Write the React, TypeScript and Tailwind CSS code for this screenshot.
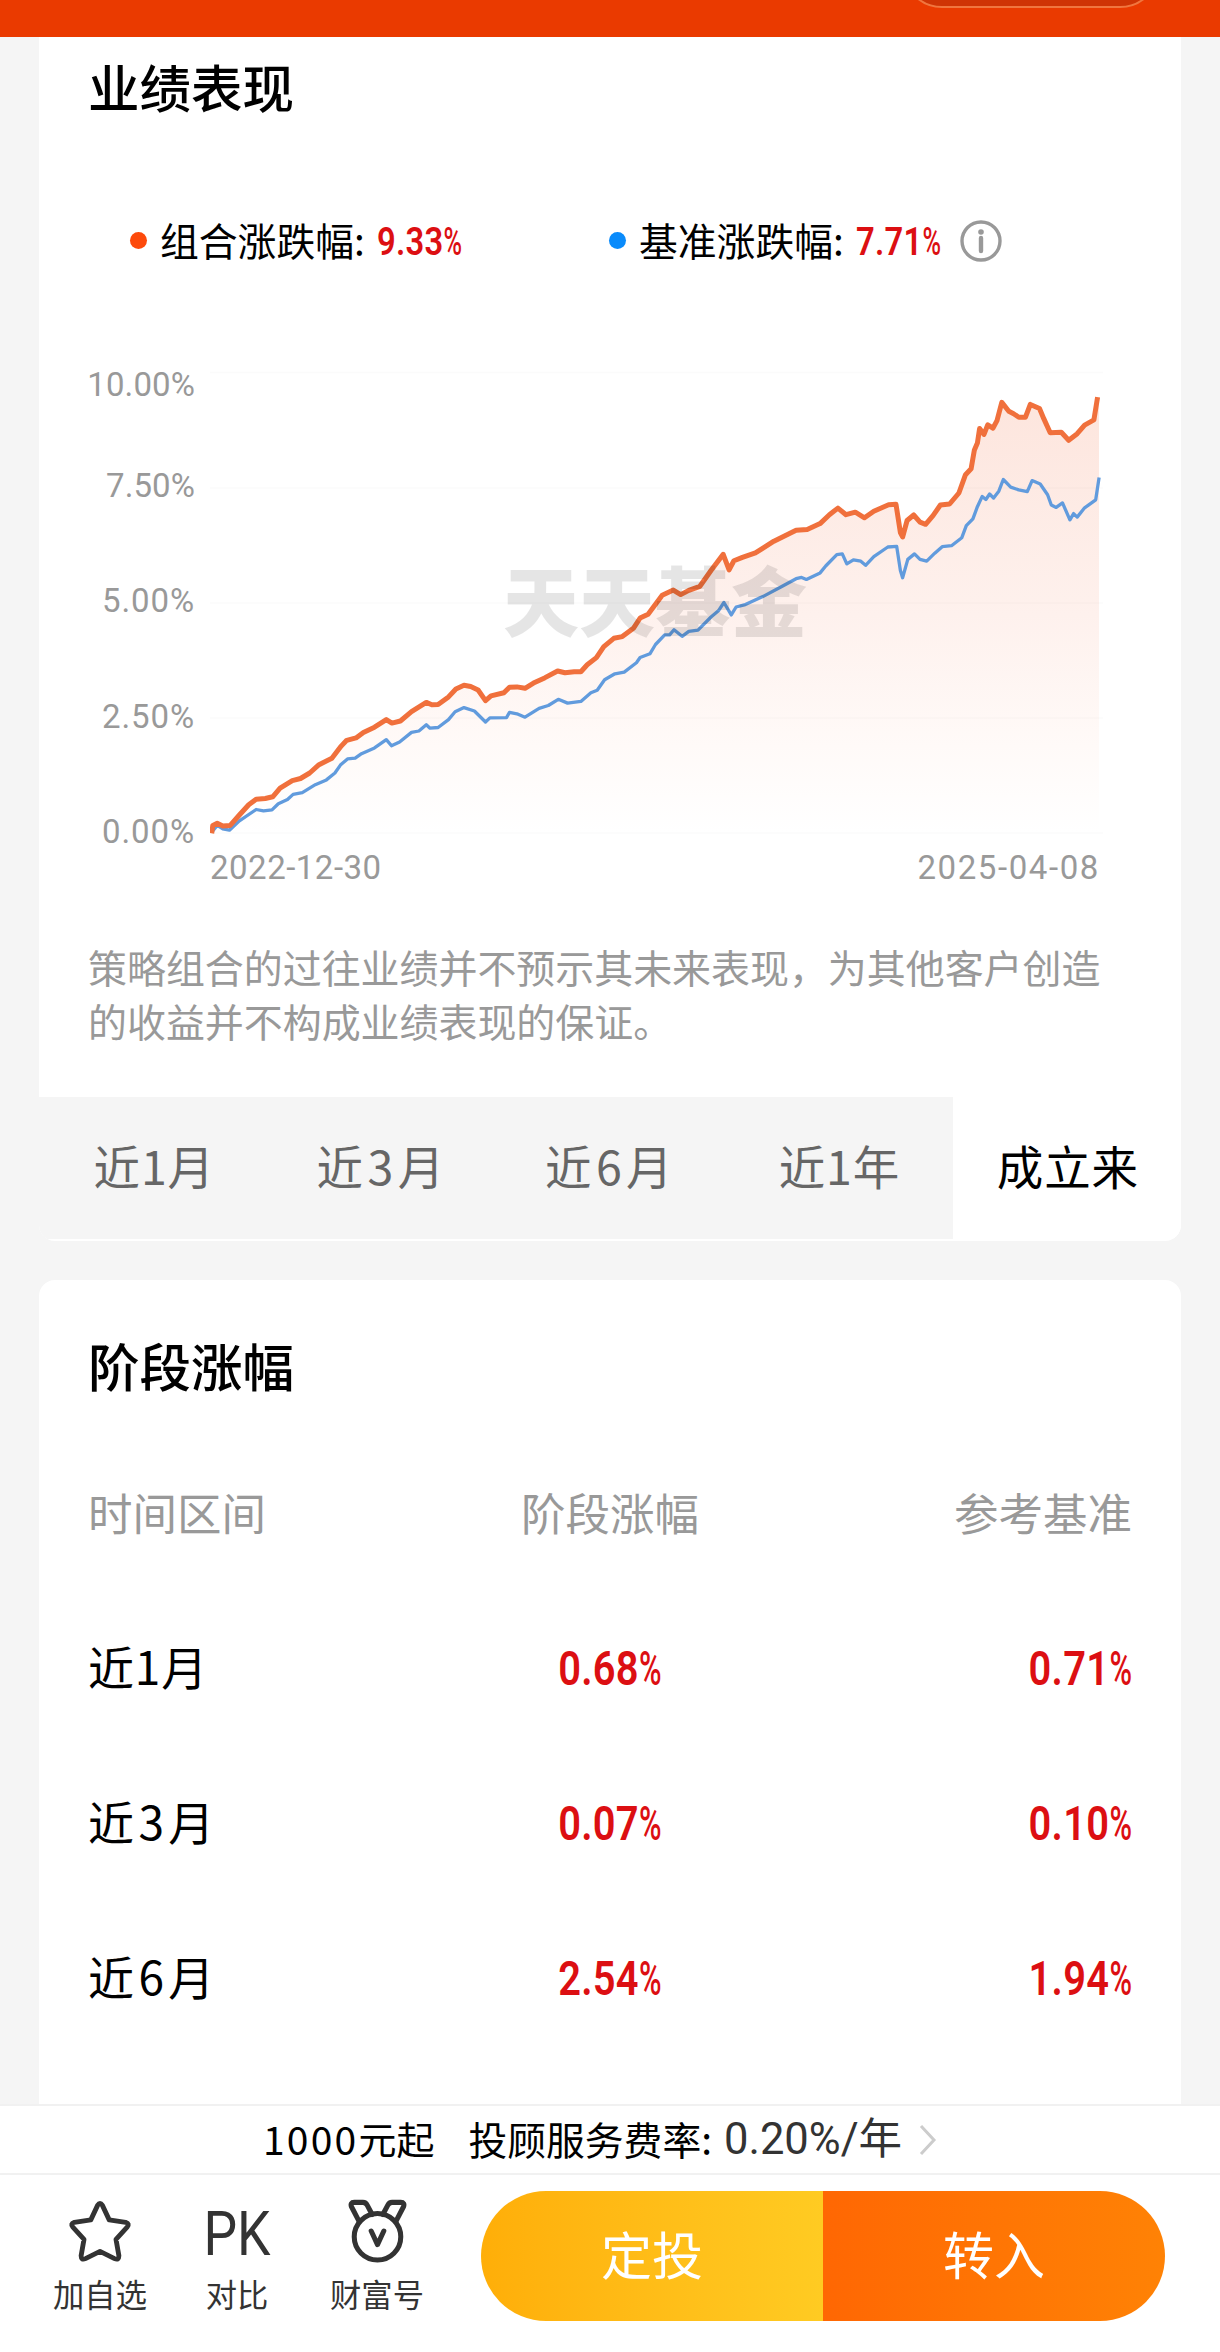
import type { ReactNode } from 'react';
import { clsx } from 'clsx';

type Point = [number, number];

const PORTFOLIO: Point[] = [
  [1.7, 473.3], [2.8, 465.4], [7.2, 463.3], [12.8, 466], [20.2, 465.4], [29.4, 455], [38.7, 444.7],
  [46.1, 439.2], [55.3, 438.5], [62.7, 436.8], [70.1, 428.2], [82.3, 420.6], [90.5, 418.5], [99.7, 413],
  [109, 404.7], [121.9, 398.2], [131.2, 386.1], [136.7, 380.3], [146, 377.9], [153.4, 372.4],
  [164.5, 367.2], [176.3, 359.6], [181.9, 363.1], [190.4, 361], [201.5, 351.7], [216.3, 342.4],
  [221.8, 344.8], [228.1, 344.5], [238.5, 336.9], [245.9, 329], [254, 325.2], [260.7, 326.5],
  [268.1, 330], [275.5, 340.7], [281, 335.9], [293.9, 332.8], [299.5, 327.2], [306.9, 326.9],
  [315, 328.3], [323.5, 323.1], [334.6, 317.9], [347.6, 311], [355, 312.8], [364.2, 311.7],
  [370.9, 311.7], [377.2, 304.8], [386.4, 297.6], [393.8, 286.6], [403.8, 278.3], [412.3, 276.6],
  [423.4, 268.3], [430.1, 258], [438.1, 254.2], [452.2, 235.3], [463.3, 230.1], [470.7, 234.6],
  [478.8, 230.4], [489.9, 226.3], [501, 210.5], [513.2, 194.3], [519.1, 209.8], [523.9, 200.8],
  [532.4, 197.4], [545.4, 192.9], [563.9, 181.2], [586.1, 170.2], [597.2, 169.5], [610.1, 163.6],
  [619.4, 154.7], [627.9, 148.1], [636, 154.7], [645.3, 152.2], [654.5, 157.8], [663.8, 151.2],
  [678.6, 144.7], [686, 144.3], [690.4, 172.6], [692.6, 177], [697.1, 160.5], [703.7, 155],
  [710, 162.2], [715.6, 164.3], [723, 155.7], [730.4, 145], [739.6, 144], [748.9, 133],
  [755.5, 114.7], [761.1, 108.8], [764.4, 89.9], [767.4, 83], [769.6, 68.5], [774, 74.4],
  [777.7, 64.8], [782.9, 68.2], [787, 60.6], [791.8, 42.4], [798.8, 51.3], [803.6, 53.7],
  [808.8, 57.2], [815.5, 57.2], [820.3, 44.4], [829.5, 48.6], [833.9, 58.9], [840.2, 72.7],
  [851.3, 72.3], [858.7, 80.3], [867.2, 73.7], [874.6, 65.1], [883.9, 59.9], [887.6, 37.2],
];

const BENCHMARK: Point[] = [
  [1.7, 472.3], [7.2, 465.4], [12.8, 468.8], [19.4, 470.2], [29.4, 460.9], [46.1, 449.5], [53.5, 450.9],
  [62, 449.9], [68.3, 443.7], [77.5, 439.5], [83.1, 434.4], [92.3, 432.6], [105.3, 424.7],
  [116.4, 419.9], [124.9, 413], [130.4, 405.1], [137.5, 398.9], [145.2, 398.2], [151.5, 393.7],
  [164.5, 387.9], [176.3, 379.6], [181.5, 385.8], [189.6, 382], [201.5, 372.4], [208.9, 371],
  [216.3, 364.8], [220, 368.2], [228.1, 367.5], [238.5, 359.6], [245.1, 351.7], [254, 347.6],
  [264.4, 351], [275.5, 362], [279.9, 357.9], [296.5, 357.6], [299.5, 352.4], [306.9, 353.8],
  [315, 357.2], [329.1, 348.3], [338.3, 345.5], [348.3, 339.3], [357.6, 343.1], [370.9, 341.4],
  [380.9, 332.8], [387.2, 330.3], [394.6, 319.7], [404.9, 313.8], [414.2, 312.1], [426.4, 302.8],
  [430.1, 297.5], [439.9, 293.8], [445.5, 284.5], [454.7, 274.9], [459.6, 274.9], [464, 269.7],
  [472.1, 276.3], [478.8, 271.4], [488, 270.1], [501, 257], [508.4, 250.8], [513.9, 242.5],
  [521.3, 254.9], [526.1, 247], [534.3, 244.9], [552.8, 236.6], [571.3, 226.7], [586.1, 218.7],
  [591.6, 217.4], [596.4, 219.4], [610.1, 212.9], [615.7, 206], [626.8, 194.6], [632.3, 193.9],
  [636.8, 203.9], [643.4, 199.8], [650.8, 201.2], [655.6, 205.3], [663.8, 196.7], [677.8, 187],
  [686.7, 186.4], [690.4, 210.5], [692.6, 217.7], [697.8, 199.4], [704.5, 193.9], [710, 199.4],
  [716.7, 201.2], [724.8, 193.2], [732.2, 186.7], [741.5, 185.7], [751.8, 177.7], [756.3, 165.7],
  [762.9, 158.8], [767.4, 146.7], [772.2, 136.4], [775.9, 139.5], [779.6, 134], [783.6, 138.1],
  [788.8, 131.2], [793.3, 119.5], [800.7, 127.1], [808.8, 129.9], [817.3, 131.6], [822.1, 120.6],
  [830.2, 124], [837.6, 134.7], [841.3, 145], [846.2, 147.4], [852.5, 142.9], [859.9, 159.8],
  [863.6, 153.6], [867.2, 157.1], [874.6, 147.8], [885.7, 139.8], [889.1, 117.5],
];

const GRID_Y = [12.5, 128, 243, 358, 473];

const TABS = ['近1月', '近3月', '近6月', '近1年', '成立来'];

const ROWS = [
  { period: '近1月', gain: '0.68%', benchmark: '0.71%' },
  { period: '近3月', gain: '0.07%', benchmark: '0.10%' },
  { period: '近6月', gain: '2.54%', benchmark: '1.94%' },
];

function toPath(points: Point[]): string {
  return points.map(([x, y], i) => `${i === 0 ? 'M' : 'L'}${x} ${y}`).join(' ');
}

function Period({ text }: { text: string }) {
  const wide = text.includes('3') || text.includes('6');
  return <span className={wide ? 'tracking-[4.4px]' : 'tracking-[0.8px]'}>{text}</span>;
}

function Percent({ className, value }: { className: string; value: string }) {
  return (
    <span
      className={clsx(
        "scale-x-[0.83] whitespace-nowrap font-['Roboto',sans-serif] font-semibold tracking-[0.3px] text-[#dc0f12]",
        className,
      )}
    >
      {value.slice(0, -1)}
      <span className="-mr-[0.17em] inline-block origin-left scale-x-[0.77] font-medium">%</span>
    </span>
  );
}

function Legend({ dot, label, value }: { dot: string; label: string; value: string }) {
  return (
    <div className="flex items-center">
      <span className={clsx('size-[17px] rounded-full', dot)} />
      <span className="ml-[13px] pb-[4px] text-[38.8px] leading-none">{label}</span>
      <Percent className="ml-[12px] w-[89px] origin-left pt-[2px] text-[39.5px] leading-none" value={value} />
    </div>
  );
}

function InfoIcon() {
  return (
    <svg className="ml-[15px] size-[42px]" viewBox="0 0 42 42" fill="none" stroke="#999" strokeWidth="3.4">
      <circle cx="21" cy="21" r="19" />
      <path d="M21 18v13" strokeLinecap="round" strokeWidth="4.4" />
      <circle cx="21" cy="12" r="2.8" fill="#999" stroke="none" />
    </svg>
  );
}

function Chart() {
  return (
    <div className="flex h-[509px] pl-[49px]">
      <div className="flex w-[107px] flex-col items-end pt-[26px] font-['Roboto',sans-serif] text-[33px] leading-[36px] tracking-[0.9px] text-[#999]">
        <span className="tracking-[0.1px]">10.00%</span>
        <span className="mt-[65px] tracking-[0.1px]">7.50%</span>
        <span className="mt-[79px]">5.00%</span>
        <span className="mt-[80px]">2.50%</span>
        <span className="mt-[79px]">0.00%</span>
      </div>
      <svg className="mt-[19px] ml-[15px] h-[480px] w-[900px]" viewBox="0 0 900 480" fill="none">
        <defs>
          <linearGradient id="area" x1="0" y1="37" x2="0" y2="473" gradientUnits="userSpaceOnUse">
            <stop offset="0" stopColor="#fde5dd" />
            <stop offset="0.5" stopColor="#fef1ed" />
            <stop offset="0.8" stopColor="#fffaf8" />
            <stop offset="1" stopColor="#fff" />
          </linearGradient>
        </defs>
        <path d={`${toPath(PORTFOLIO)} L889 40 V473 H1.7 Z`} fill="url(#area)" />
        {GRID_Y.map((y) => (
          <path key={y} d={`M0 ${y}H893`} stroke="#000" strokeOpacity="0.015" strokeWidth="1.5" />
        ))}
        <path d={toPath(BENCHMARK)} stroke="#619bdd" strokeWidth="3.3" strokeLinejoin="round" />
        <path d={toPath(PORTFOLIO)} stroke="#f0703c" strokeWidth="5" strokeLinejoin="round" />
        <text
          x="293"
          y="271"
          fill="#000"
          fillOpacity="0.1"
          fontSize="76"
          fontWeight="900"
          fontFamily="'Noto Sans CJK SC', sans-serif"
        >
          天天基金
        </text>
      </svg>
    </div>
  );
}

function PerformanceCard() {
  return (
    <section className="mx-[39px] h-[1204px] overflow-hidden rounded-b-[16px] bg-white">
      <h2 className="flex h-[104px] items-center pb-[7px] pl-[49px] text-[51.5px] font-medium">业绩表现</h2>
      <div className="flex h-[200px] items-center pl-[91px]">
        <div className="w-[479px]">
          <Legend dot="bg-[#fd4a0b]" label="组合涨跌幅:" value="9.33%" />
        </div>
        <Legend dot="bg-[#0a8bfb]" label="基准涨跌幅:" value="7.71%" />
        <InfoIcon />
      </div>
      <Chart />
      <div className="flex h-[36px] items-center justify-between pr-[81px] pl-[171px] font-['Roboto',sans-serif] text-[33px] text-[#999]">
        <span className="tracking-[0.5px]">2022-12-30</span>
        <span className="tracking-[1.6px]">2025-04-08</span>
      </div>
      <p className="mt-[53px] pl-[49px] text-[38.95px] leading-[54px] whitespace-nowrap text-[#999]">
        策略组合的过往业绩并不预示其未来表现，为其他客户创造
        <br />
        的收益并不构成业绩表现的保证。
      </p>
      <div className="mt-[50px] grid h-[142px] grid-cols-5">
        {TABS.map((tab) => (
          <span
            key={tab}
            className={clsx(
              'flex items-center justify-center pb-[6px] pl-[2px] text-[46.5px]',
              tab === '成立来' ? 'bg-white text-black' : 'bg-[#f5f5f5] text-[#666]',
            )}
          >
            <Period text={tab} />
          </span>
        ))}
      </div>
    </section>
  );
}

function StageCard() {
  return (
    <section className="mx-[39px] mt-[39px] h-[824px] rounded-t-[16px] bg-white px-[49px]">
      <h2 className="flex h-[160px] items-center pt-[10px] text-[51.5px] font-medium">阶段涨幅</h2>
      <div className="grid h-[150px] grid-cols-3 items-center pb-[5px] text-[44.5px] text-[#999]">
        <span>时间区间</span>
        <span className="text-center">阶段涨幅</span>
        <span className="text-right">参考基准</span>
      </div>
      {ROWS.map((row) => (
        <div key={row.period} className="grid h-[155px] grid-cols-3 items-center text-[46px]">
          <span className="pb-[4px]">
            <Period text={row.period} />
          </span>
          <Percent className="pt-[2px] text-center text-[48px]" value={row.gain} />
          <Percent className="origin-right pt-[2px] text-right text-[48px]" value={row.benchmark} />
        </div>
      ))}
    </section>
  );
}

function Action({ label, className, children }: { label: string; className: string; children: ReactNode }) {
  return (
    <div className={clsx('flex flex-col items-center text-[#333]', className)}>
      <div className="flex h-[64px] items-center justify-center">{children}</div>
      <span className="mt-[14px] text-[31.3px] leading-[34px] whitespace-nowrap">{label}</span>
    </div>
  );
}

function StarIcon() {
  return (
    <svg className="mt-[2px] h-[62px] w-[64px]" viewBox="0 0 66 64" fill="none" stroke="#333" strokeWidth="5" strokeLinejoin="round">
      <path d="M30.5 4.5Q33 0.5 35.5 4.5L42.5 19.5 59.5 22Q64 23.5 61 27L49.5 39.5 52.5 56.5Q52.5 61.5 48 59.5L33 52 18 59.5Q13.5 61.5 13.5 56.5L16.5 39.5 5 27Q2 23.5 6.5 22L23.5 19.5Z" />
    </svg>
  );
}

function MedalIcon() {
  return (
    <svg className="h-[64px] w-[59px]" viewBox="0 0 60 66" fill="none" stroke="#333" strokeWidth="5.2" strokeLinejoin="round" strokeLinecap="round">
      <circle cx="30" cy="39" r="24" />
      <path d="M11 23 3.2 8Q1.5 3.5 6 3.5H15Q18 3.5 19.5 6.5L24.5 16" />
      <path d="M49 23 56.8 8Q58.5 3.5 54 3.5H45Q42 3.5 40.5 6.5L35.5 16" />
      <path d="M23.5 33 30 47 36.5 33" />
    </svg>
  );
}

function BottomBar() {
  return (
    <footer className="h-[248px] bg-white">
      <div className="flex h-[71px] items-center border-y-2 border-[#f1f1f1] pl-[263px] leading-none">
        <span className="pb-[3px] text-[39px] tracking-[2.2px]">1000</span>
        <span className="pb-[3px] text-[38px]">元起</span>
        <span className="ml-[34px] pb-[3px] text-[38.8px]">投顾服务费率:</span>
        <span className="ml-[12px] font-['Roboto','Noto_Sans_CJK_SC',sans-serif] text-[43.5px] text-[#333]">
          0.20%/年
        </span>
        <svg className="ml-[16px] h-[32px] w-[20px]" viewBox="0 0 20 32" fill="none" stroke="#ccc" strokeWidth="3">
          <path d="M3 2 16 16 3 30" />
        </svg>
      </div>
      <div className="flex pt-[16px]">
        <div className="flex w-[481px] pt-[8px] pl-[40px]">
          <Action label="加自选" className="w-[120px]">
            <StarIcon />
          </Action>
          <Action label="对比" className="ml-[17px] w-[120px]">
            <span className="scale-x-[0.86] pt-[6px] font-['Roboto',sans-serif] text-[62px] leading-none">PK</span>
          </Action>
          <Action label="财富号" className="ml-[20px] w-[120px]">
            <MedalIcon />
          </Action>
        </div>
        <div className="flex h-[130px] w-[684px] overflow-hidden rounded-full text-[51px] text-white">
          <button className="w-1/2 bg-linear-to-r from-[#ffae08] to-[#ffcb22] pb-[5px]">定投</button>
          <button className="w-1/2 bg-linear-to-r from-[#ff6703] to-[#ff8205] pb-[5px]">转入</button>
        </div>
      </div>
    </footer>
  );
}

export default function App() {
  return (
    <div className="h-[2352px] w-[1220px] overflow-hidden bg-[#f5f5f5] font-['Noto_Sans_CJK_SC',sans-serif] text-black">
      <header className="flex h-[37px] justify-end overflow-hidden bg-[#ea3a00] pr-[60px]">
        <div className="-mt-[72px] h-[80px] w-[258px] rounded-full border-2 border-[#f0763f] bg-[#cf3405]" />
      </header>
      <PerformanceCard />
      <StageCard />
      <BottomBar />
    </div>
  );
}
